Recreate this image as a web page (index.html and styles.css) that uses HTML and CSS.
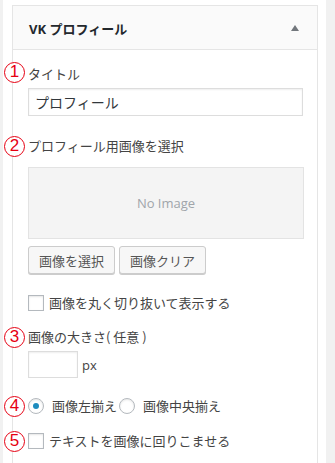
FILE: index.html
```html
<!DOCTYPE html>
<html lang="ja">

<head>
    <meta charset="UTF-8">
    <meta name="viewport" content="width=device-width, initial-scale=1.0">
    <title>VK プロフィール</title>
    <link rel="stylesheet" href="styles.css">
</head>

<body>
    <div class="page">
        <div class="widget">
            <div class="widget-head">
                <h3>VK プロフィール</h3>
                <span class="toggle"></span>
            </div>

            <div class="widget-body">
                <p class="field-label first"><span class="num">1</span>タイトル</p>
                <input class="text-input" type="text" value="プロフィール">

                <p class="field-label gap-2"><span class="num">2</span>プロフィール用画像を選択</p>
                <div class="no-image">No Image</div>
                <div class="buttons">
                    <button class="btn">画像を選択</button>
                    <button class="btn">画像クリア</button>
                </div>

                <label class="check-row round-row"><span class="box"></span>画像を丸く切り抜いて表示する</label>

                <p class="field-label gap-3"><span class="num">3</span>画像の大きさ( 任意 )</p>
                <div class="size-row">
                    <input class="size-input" type="text">
                    <span>px</span>
                </div>

                <div class="radio-row">
                    <span class="num">4</span>
                    <label class="radio"><span class="dot checked"></span>画像左揃え</label>
                    <label class="radio"><span class="dot"></span>画像中央揃え</label>
                </div>

                <label class="check-row wrap-row"><span class="num">5</span><span class="box"></span>テキストを画像に回りこませる</label>
            </div>
        </div>
    </div>
</body>

</html>
```

FILE: styles.css
```css
* {
    margin: 0;
    padding: 0;
    box-sizing: border-box;
}

body {
    background-color: #f1f1f1;
    font-family: "Noto Sans CJK JP", "Open Sans", sans-serif;
    font-size: 13px;
    color: #444;
    height: 463px;
    overflow: hidden;
}

.page {
    background-color: #fff;
    margin: 0 9px 0 3px;
    padding: 5px 8px 0 9px;
    height: 463px;
}

.widget {
    border: 1px solid #e5e5e5;
    border-bottom: none;
    background-color: #fff;
    height: 458px;
}

.widget-head {
    display: flex;
    align-items: center;
    justify-content: space-between;
    height: 44px;
    padding: 0 18px 0 16px;
    background-color: #fafafa;
    border-bottom: 1px solid #e5e5e5;
}

.widget-head h3 {
    font-family: "Open Sans", "Noto Sans CJK JP", sans-serif;
    font-size: 13px;
    font-weight: bold;
    color: #23282d;
    padding-top: 2px;
}

.toggle {
    width: 0;
    height: 0;
    border-left: 4px solid transparent;
    border-right: 4px solid transparent;
    border-bottom: 6px solid #72777c;
    margin-top: 1px;
}

.widget-body {
    padding: 0 13px 0 15px;
}

.num {
    position: absolute;
    left: -24px;
    top: 0;
    width: 21px;
    height: 21px;
    border: 1.5px solid #e60012;
    border-radius: 50%;
    color: #e60012;
    font-family: "Liberation Sans", sans-serif;
    font-size: 17px;
    line-height: 18px;
    text-align: center;
    background-color: #fff;
}

.field-label {
    position: relative;
    line-height: 20px;
}

.field-label.first {
    margin-top: 14px;
}

.field-label.first .num {
    top: -2px;
}

.field-label.gap-2 {
    margin-top: 20px;
}

.field-label.gap-3 {
    margin-top: 14px;
}

.text-input {
    display: block;
    width: 275px;
    height: 28px;
    margin-top: 4px;
    border: 1px solid #ddd;
    box-shadow: inset 0 1px 2px rgba(0, 0, 0, 0.07);
    padding: 0 6px;
    font-family: "Noto Sans CJK JP", sans-serif;
    font-size: 14px;
    color: #32373c;
    background-color: #fff;
}

.no-image {
    margin-top: 11px;
    width: 276px;
    height: 72px;
    background-color: #f4f4f4;
    border: 1px solid #e3e3e3;
    display: flex;
    align-items: center;
    justify-content: center;
    font-family: "Open Sans", sans-serif;
    font-size: 13px;
    color: #a0a5aa;
}

.buttons {
    display: flex;
    gap: 4px;
    margin-top: 7px;
}

.btn {
    width: 87px;
    height: 28px;
    border: 1px solid #ccc;
    border-radius: 3px;
    background-color: #f7f7f7;
    box-shadow: 0 1px 0 #ccc;
    font-family: "Noto Sans CJK JP", sans-serif;
    font-size: 13px;
    color: #555;
}

.check-row {
    position: relative;
    display: flex;
    align-items: center;
    line-height: 20px;
}

.round-row {
    margin-top: 19px;
}

.wrap-row {
    margin-top: 15px;
}

.box {
    width: 16px;
    height: 16px;
    border: 1px solid #b4b9be;
    background-color: #fff;
    box-shadow: inset 0 1px 2px rgba(0, 0, 0, 0.1);
    margin-right: 5px;
}

.size-row {
    display: flex;
    align-items: center;
    gap: 4px;
    margin-top: 4px;
    font-family: "Open Sans", sans-serif;
}

.size-input {
    width: 50px;
    height: 27px;
    border: 1px solid #ddd;
    box-shadow: inset 0 1px 2px rgba(0, 0, 0, 0.07);
}

.radio-row {
    position: relative;
    display: flex;
    align-items: center;
    gap: 2px;
    line-height: 20px;
    margin-top: 18px;
}

.radio {
    display: flex;
    align-items: center;
}

.dot {
    width: 16px;
    height: 16px;
    border: 1px solid #b4b9be;
    border-radius: 50%;
    background-color: #fff;
    box-shadow: inset 0 1px 2px rgba(0, 0, 0, 0.1);
    margin-right: 8px;
    display: flex;
    align-items: center;
    justify-content: center;
}

.dot.checked::before {
    content: "";
    width: 6px;
    height: 6px;
    border-radius: 50%;
    background-color: #1e8cbe;
}
```
